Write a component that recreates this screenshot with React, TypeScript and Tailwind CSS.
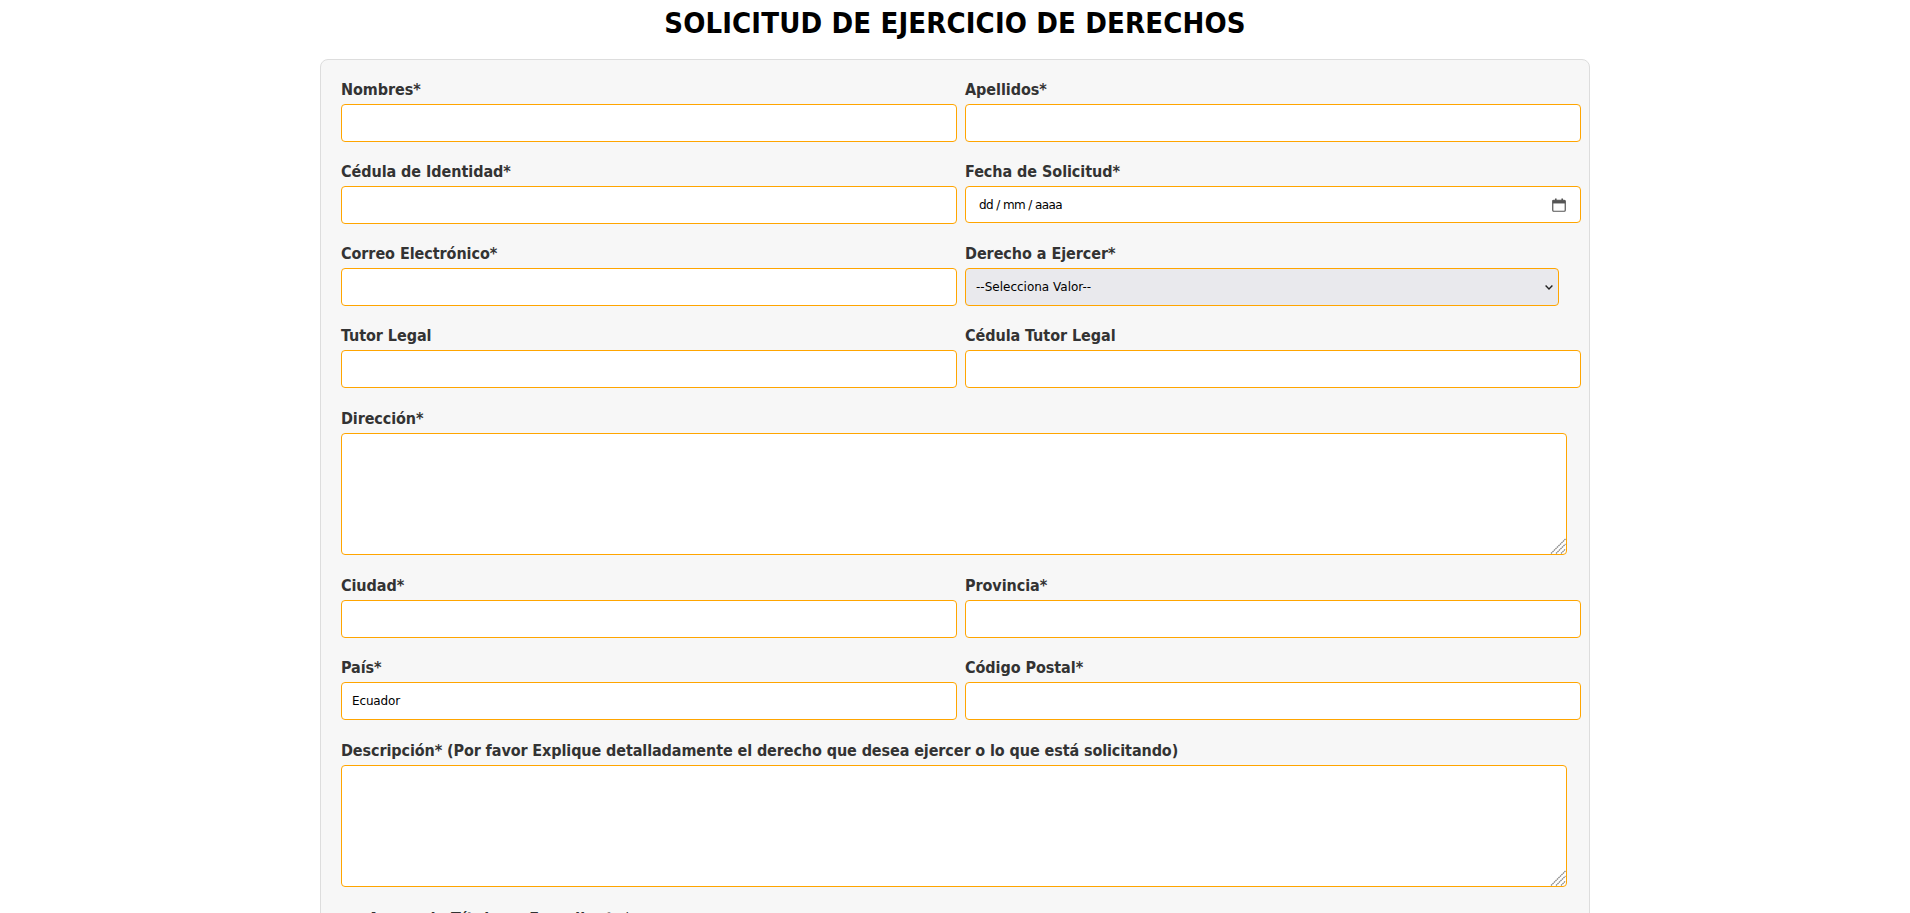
const inputCls = "block w-full h-[38px] bg-white border border-[#ffa500] rounded-[4px] px-[10px] text-[12px] tracking-[-0.15px] text-black outline-none";
const labelCls = "block h-[26px] leading-[24px] text-[16px] font-bold text-[#333] font-['DejaVu_Sans_Condensed','DejaVu_Sans',sans-serif]";

function Field({ label, value }: { label: string; value?: string }) {
  return (
    <div className="mb-[18px]">
      <label className={labelCls + " tracking-[-0.06px]"}>{label}</label>
      <input type="text" defaultValue={value} className={inputCls} />
    </div>
  );
}

function Area({ label }: { label: string }) {
  return (
    <div className="mb-[19px] mt-[1px]">
      <label className={labelCls + " tracking-[-0.1px]"}>{label}</label>
      <div className="relative w-[1226px] h-[122px]">
        <textarea className="block w-full h-full bg-white border border-[#ffa500] rounded-[4px] p-[10px] text-[12px] outline-none resize-none" />
        <svg className="absolute right-[1px] bottom-[1px]" width="16" height="16" viewBox="0 0 16 16" stroke="#8a8a8a" strokeWidth="1.3" strokeDasharray="1.6 0.5">
          <line x1="1" y1="15.5" x2="15.5" y2="1" />
          <line x1="6" y1="15.5" x2="15.5" y2="6" />
          <line x1="11" y1="15.5" x2="15.5" y2="11" />
        </svg>
      </div>
    </div>
  );
}

function Row({ children }: { children: React.ReactNode }) {
  return <div className="grid grid-cols-[616px_616px] gap-x-[8px]">{children}</div>;
}

export default function App() {
  return (
    <div className="bg-white min-h-screen font-['DejaVu_Sans',sans-serif]">
      <h1 className="h-[47px] pt-[6px] text-center text-[29px] leading-[34px] tracking-[0.14px] font-bold text-black font-['DejaVu_Sans_Condensed','DejaVu_Sans',sans-serif]">
        SOLICITUD DE EJERCICIO DE DERECHOS
      </h1>
      <form className="mx-auto mt-[12px] w-[1270px] bg-[#f7f7f7] border border-[#dddddd] rounded-[8px] pl-[20px] pt-[18px] pb-[40px]">
        <Row>
          <Field label="Nombres*" />
          <Field label="Apellidos*" />
        </Row>
        <Row>
          <Field label="Cédula de Identidad*" />
          <div className="mb-[18px]">
            <label className={labelCls + " tracking-[-0.06px]"}>Fecha de Solicitud*</label>
            <div className="flex items-center justify-between h-[37px] mb-[1px] bg-white border border-[#ffa500] rounded-[4px] pl-[13px] pr-[14px] text-[12px] tracking-[-0.6px] text-black">
              <span>dd / mm / aaaa</span>
              <svg width="14" height="14" viewBox="0 0 14 14" fill="none">
                <rect x="0.75" y="2.25" width="12.5" height="11" rx="1" stroke="#555" strokeWidth="1.2" />
                <rect x="0.75" y="2.25" width="12.5" height="3.2" fill="#555" />
                <rect x="3" y="0.5" width="1.6" height="2" fill="#555" />
                <rect x="9.4" y="0.5" width="1.6" height="2" fill="#555" />
              </svg>
            </div>
          </div>
        </Row>
        <Row>
          <Field label="Correo Electrónico*" />
          <div className="mb-[18px]">
            <label className={labelCls + " tracking-[-0.06px]"}>Derecho a Ejercer*</label>
            <div className="relative w-[594px] h-[38px]">
              <select className="block appearance-none w-full h-full bg-[#e9e9ed] border border-[#ffa500] rounded-[4px] pl-[10px] pr-[24px] text-[12px] text-black outline-none">
                <option>--Selecciona Valor--</option>
              </select>
              <svg className="absolute right-[6px] top-[17px]" width="8" height="5" viewBox="0 0 8 5" fill="none" stroke="#222" strokeWidth="1.4">
                <path d="M0.6 0.6 L4 4 L7.4 0.6" />
              </svg>
            </div>
          </div>
        </Row>
        <Row>
          <Field label="Tutor Legal" />
          <Field label="Cédula Tutor Legal" />
        </Row>
        <Area label="Dirección*" />
        <Row>
          <Field label="Ciudad*" />
          <Field label="Provincia*" />
        </Row>
        <Row>
          <Field label="País*" value="Ecuador" />
          <Field label="Código Postal*" />
        </Row>
        <Area label="Descripción* (Por favor Explique detalladamente el derecho que desea ejercer o lo que está solicitando)" />
        <label className={labelCls + " pl-[27px] tracking-[0.3px] pt-[1px]"}>Anexo de Títulos o Expediente*</label>
      </form>
    </div>
  );
}
